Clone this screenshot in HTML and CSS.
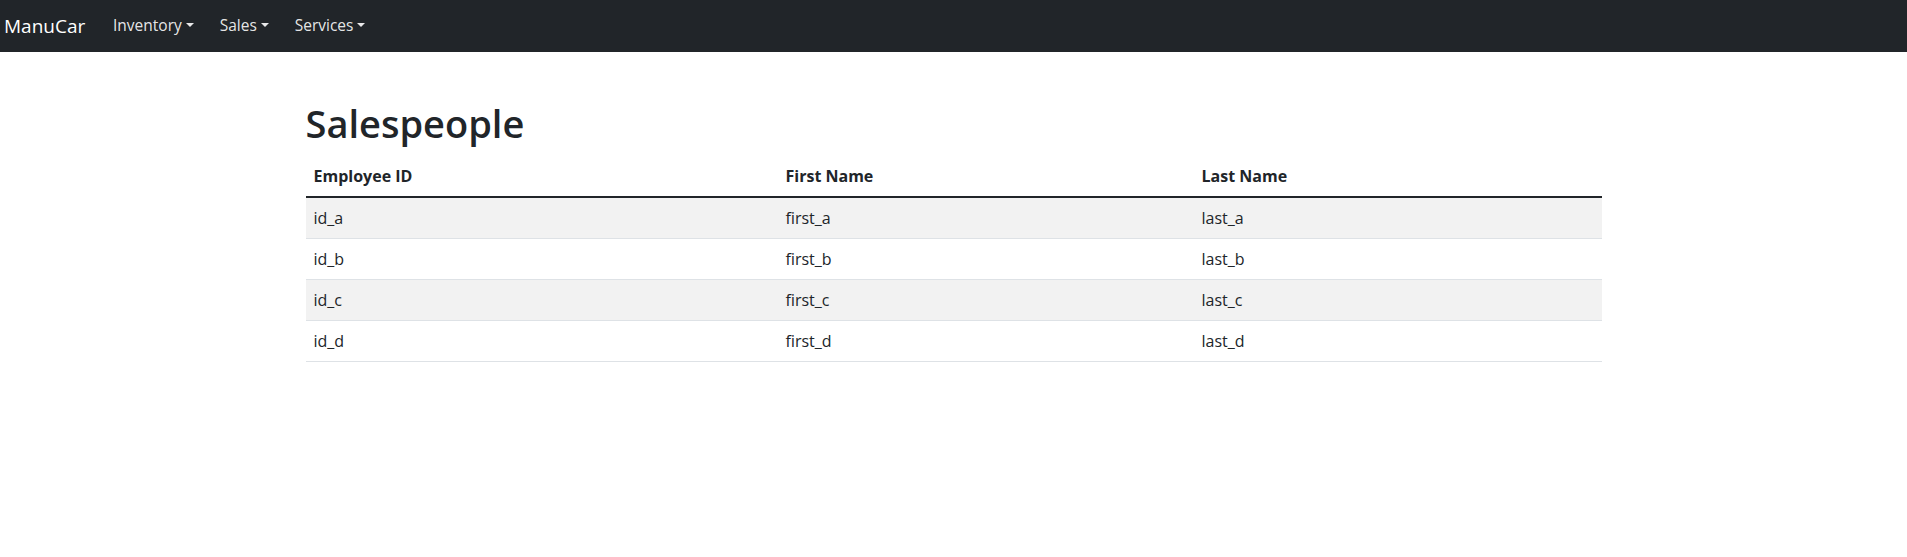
FILE: index.html
```html
<!DOCTYPE html>
<html lang="en">
<head>
<meta charset="utf-8">
<title>ManuCar</title>
<link rel="stylesheet" href="styles.css">
</head>
<body>
<nav class="navbar">
  <a class="brand" href="#">ManuCar</a>
  <ul class="nav">
    <li><a class="nav-link" href="#">Inventory<span class="caret"></span></a></li>
    <li><a class="nav-link" href="#">Sales<span class="caret"></span></a></li>
    <li><a class="nav-link" href="#">Services<span class="caret"></span></a></li>
  </ul>
</nav>
<main class="container">
  <h1 class="title">Salespeople</h1>
  <table class="table">
    <colgroup>
      <col class="c1"><col class="c2"><col class="c3">
    </colgroup>
    <thead>
      <tr><th>Employee ID</th><th>First Name</th><th>Last Name</th></tr>
    </thead>
    <tbody>
      <tr><td>id_a</td><td>first_a</td><td>last_a</td></tr>
      <tr><td>id_b</td><td>first_b</td><td>last_b</td></tr>
      <tr><td>id_c</td><td>first_c</td><td>last_c</td></tr>
      <tr><td>id_d</td><td>first_d</td><td>last_d</td></tr>
    </tbody>
  </table>
</main>
</body>
</html>
```
FILE: styles.css
```css
* { box-sizing: border-box; }
body {
  margin: 0;
  font-family: "Open Sans", "Noto Sans", sans-serif;
  font-size: 16px;
  line-height: 1.5;
  color: #212529;
  background: #fff;
}
.navbar {
  display: flex;
  align-items: center;
  height: 52px;
  background: #212529;
  padding: 0 4px;
}
.brand {
  color: #fff;
  text-decoration: none;
  font-size: 19px;
  width: 96px;
}
.nav {
  display: flex;
  list-style: none;
  margin: 0;
  padding: 0;
}
.nav-link {
  display: block;
  color: rgba(255,255,255,.9);
  text-decoration: none;
  font-size: 15.5px;
  padding: 8px 13px;
}
.caret {
  display: inline-block;
  margin-left: .255em;
  vertical-align: .255em;
  border-top: .3em solid;
  border-left: .3em solid transparent;
  border-right: .3em solid transparent;
}
.container {
  width: 1320px;
  margin: 48px auto 0;
  padding: 0 12px;
}
.title {
  font-size: 38px;
  font-weight: 600;
  line-height: 1.2;
  margin: 0 0 8px;
  padding-top: 1px;
  height: 48px;
}
.table {
  width: 100%;
  border-collapse: collapse;
  margin-bottom: 16px;
}
.c1 { width: 472px; }
.c2 { width: 416px; }
.table th, .table td {
  text-align: left;
  padding: 8px;
  border-bottom: 1px solid #dee2e6;
}
.table th { font-weight: 700; }
.table tbody { border-top: 2px solid #212529; }
.table tbody tr:nth-child(odd) td { background: #f2f2f2; }
```
